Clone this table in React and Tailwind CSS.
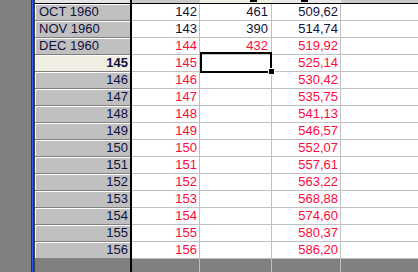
import React from "react";

const rows = [
  { h: "OCT 1960", a: "142", b: "461", c: "509,62", red: false, label: true },
  { h: "NOV 1960", a: "143", b: "390", c: "514,74", red: false, label: true },
  { h: "DEC 1960", a: "144", b: "432", c: "519,92", red: true, label: true },
  { h: "145", a: "145", b: "", c: "525,14", red: true, active: true },
  { h: "146", a: "146", b: "", c: "530,42", red: true },
  { h: "147", a: "147", b: "", c: "535,75", red: true },
  { h: "148", a: "148", b: "", c: "541,13", red: true },
  { h: "149", a: "149", b: "", c: "546,57", red: true },
  { h: "150", a: "150", b: "", c: "552,07", red: true },
  { h: "151", a: "151", b: "", c: "557,61", red: true },
  { h: "152", a: "152", b: "", c: "563,22", red: true },
  { h: "153", a: "153", b: "", c: "568,88", red: true },
  { h: "154", a: "154", b: "", c: "574,60", red: true },
  { h: "155", a: "155", b: "", c: "580,37", red: true },
  { h: "156", a: "156", b: "", c: "586,20", red: true },
];

function Row({ r }) {
  const color = r.red ? "text-[#ff0a3c]" : "text-[#10103c]";
  return (
    <div className="flex h-[17px]">
      <div
        className={`w-[95px] h-[17px] border-b border-[#808080] shadow-[inset_1px_1px_0_#ffffff] text-[13px] leading-[16px] text-[#10103c] whitespace-nowrap ${
          r.active ? "bg-[#f0ede2] font-bold" : "bg-[#c0c0c0]"
        } ${r.label ? "text-left pl-[4px]" : "text-right pr-[2px]"}`}
      >
        {r.h}
      </div>
      <div className="w-[2px] bg-black" />
      <div className={`w-[68px] bg-white border-r border-b border-[#c0c0c0] text-right pr-[2px] text-[13px] leading-[16px] ${color}`}>
        {r.a}
      </div>
      <div className={`w-[72px] bg-white border-r border-b border-[#c0c0c0] text-right pr-[3px] text-[13px] leading-[16px] ${color}`}>
        {r.b}
      </div>
      <div className={`w-[69px] bg-white border-r border-b border-[#c0c0c0] text-right pr-[2px] text-[13px] leading-[16px] ${color}`}>
        {r.c}
      </div>
      <div className="flex-1 bg-white border-b border-[#c0c0c0]" />
    </div>
  );
}

export default function App() {
  return (
    <div
      className="w-[418px] h-[272px] flex overflow-hidden bg-[#808080]"
      style={{ fontFamily: '"Liberation Sans", Arial, sans-serif' }}
    >
      <div className="w-[31px] shrink-0 bg-[#808080]" />
      <div className="w-[3px] shrink-0 flex">
        <div className="w-[1px] bg-[#0028c8]" />
        <div className="w-[1px] bg-[#2a5cff]" />
        <div className="w-[1px] bg-[#0032d8]" />
      </div>
      <div className="w-[1px] shrink-0 bg-[#404040]" />
      <div className="relative flex-1 flex flex-col">
        <div className="flex h-[3px]">
          <div className="w-[95px] bg-[#e4e4e4]" />
          <div className="w-[2px] bg-black" />
          <div className="w-[68px] bg-[#c8c8c8]" />
          <div className="w-[72px] bg-[#f0ede2] flex">
            <div className="ml-[50px] w-[7px] h-[2px] bg-black" />
          </div>
          <div className="w-[69px] bg-[#e8e8e8] flex">
            <div className="ml-[29px] w-[7px] h-[2px] bg-black" />
          </div>
          <div className="flex-1 bg-[#c8c8c8]" />
        </div>
        <div className="h-[1px] bg-black" />
        {rows.map((r, i) => (
          <Row key={i} r={r} />
        ))}
        <div className="flex flex-1">
          <div className="w-[95px] bg-[#808080]" />
          <div className="w-[2px] bg-black" />
          <div className="w-[68px] border-r border-[#c0c0c0]" />
          <div className="w-[72px] border-r border-[#c0c0c0]" />
          <div className="w-[69px] border-r border-[#c0c0c0]" />
          <div className="flex-1" />
        </div>
        <div className="absolute left-[165px] top-[52px] w-[72px] h-[21px] border-2 border-black" />
        <div className="absolute left-[233px] top-[68px] w-[7px] h-[7px] bg-black border border-white" />
      </div>
    </div>
  );
}
